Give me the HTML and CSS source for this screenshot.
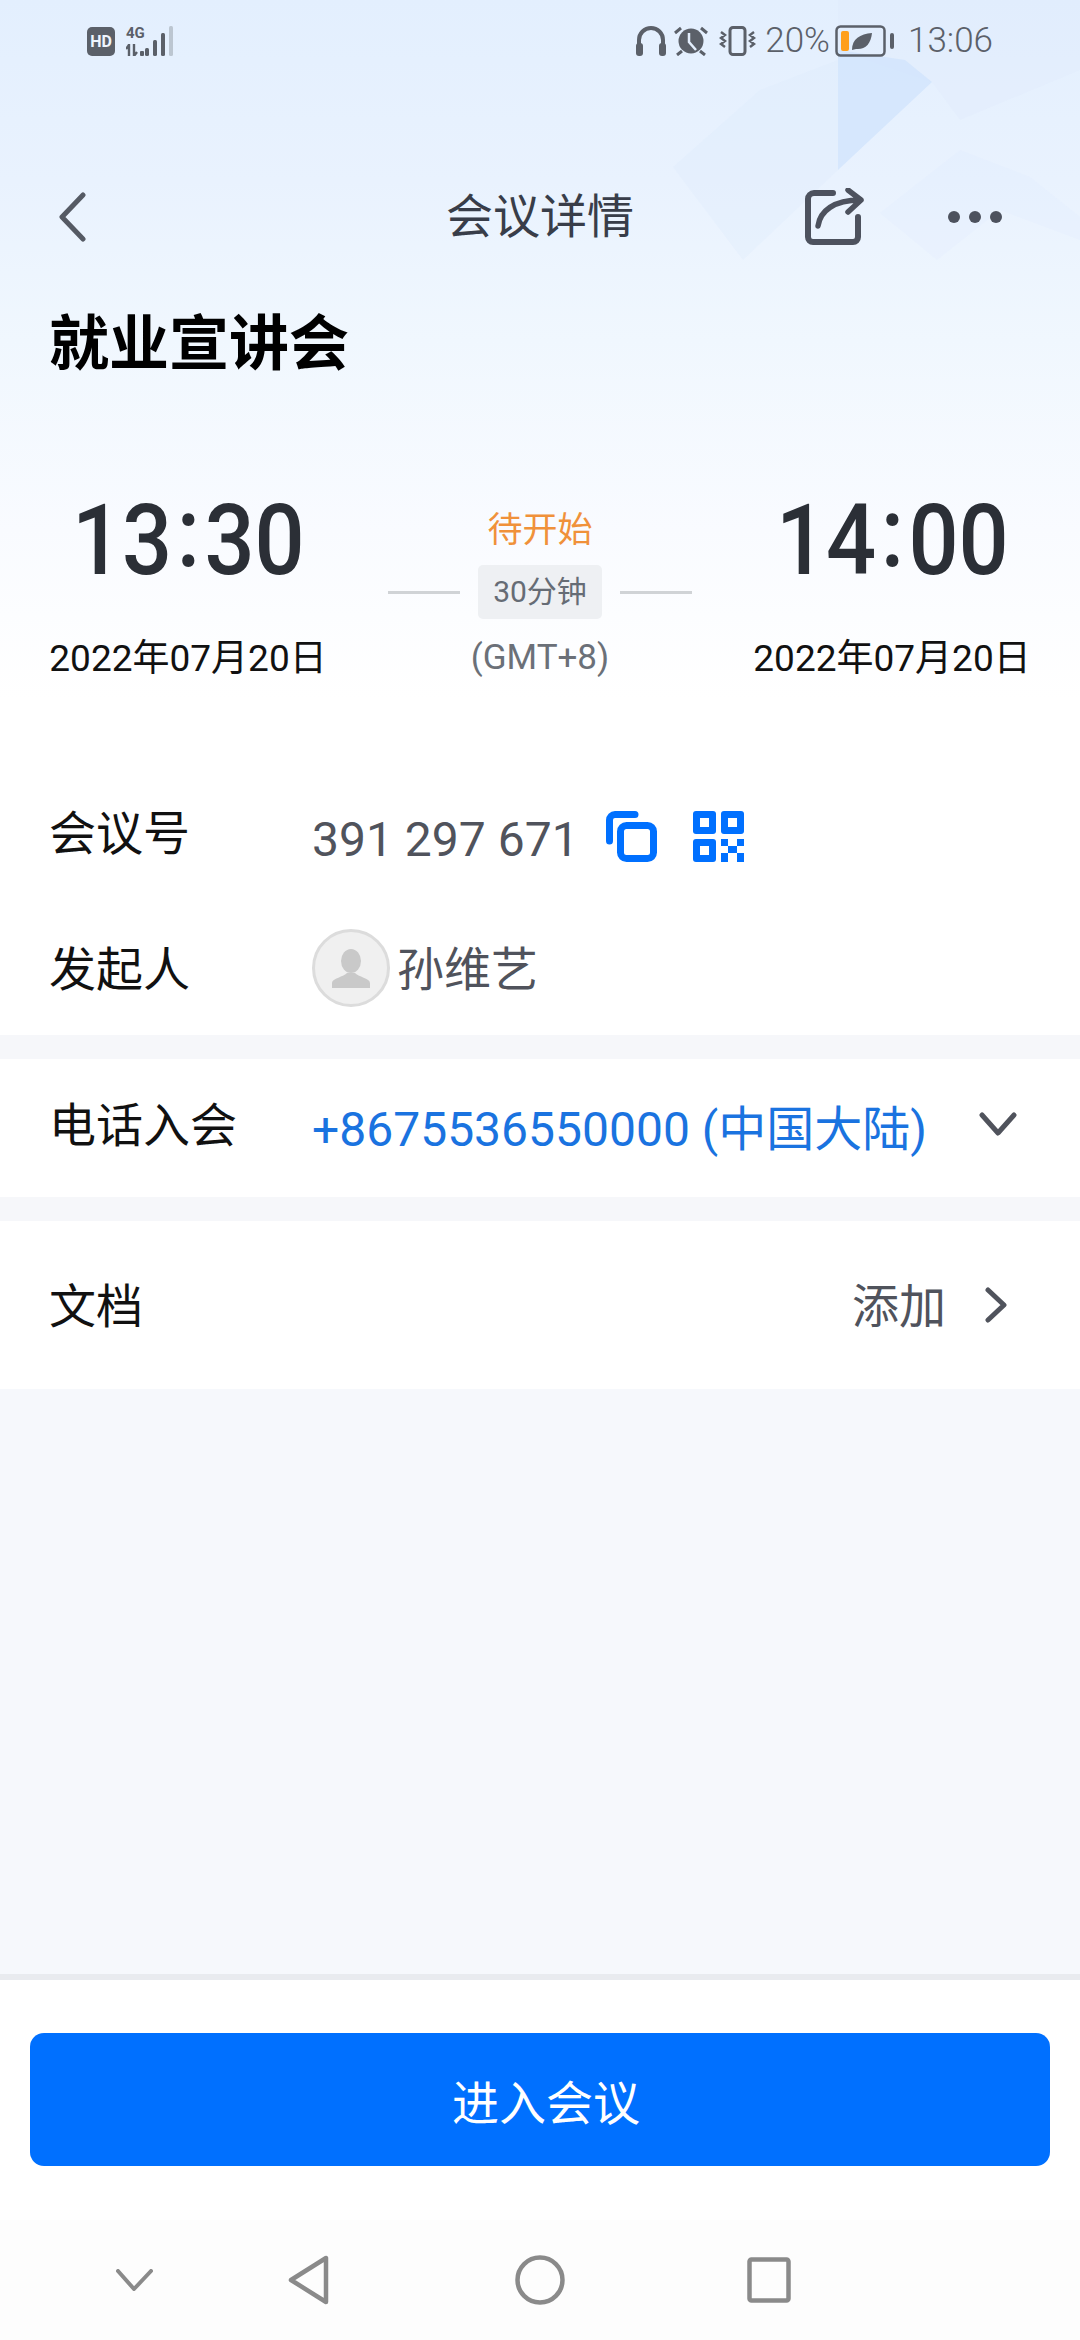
FILE: index.html
```html
<!DOCTYPE html>
<html lang="zh-CN">
<head>
<meta charset="utf-8" />
<meta name="viewport" content="width=device-width,initial-scale=1" />
<title>会议详情</title>
<link rel="stylesheet" href="styles.css">
</head>
<body>
<div class="page">

  <div class="top">
    <!-- fondo decorativo -->
    <svg class="decor" width="1080" height="330" viewBox="0 0 1080 330">
      <polygon points="673,167 760,90 838,60 838,170 743,260" fill="#dce9fc" opacity=".28"/>
      <polygon points="838,0 1080,0 1080,70 960,120 932,82 838,50" fill="#dae8fc" opacity=".2"/>
      <polygon points="838,50 905,60 932,82 838,170" fill="#cfe3fc" opacity=".7"/>
      <polygon points="880,213 960,150 1030,177 1080,217 1080,240 1000,210 937,260" fill="#dce9fc" opacity=".16"/>
    </svg>

    <div class="status">
      <div class="status-left">
        <span class="hd">HD</span>
        <div class="net">
          <span class="net-label">4G</span>
          <svg width="24" height="12" viewBox="0 0 24 12" class="net-arrows">
            <path d="M3 0v12M0 5l3-4M8 0v12M8 12l3-4" stroke="#5b6069" stroke-width="2.4" fill="none"/>
            <rect x="14" y="7" width="4" height="5" rx="1" fill="#5b6069"/>
          </svg>
        </div>
        <svg class="bars" width="29" height="30" viewBox="0 0 29 30">
          <rect x="0" y="22" width="4" height="8" rx="1.500" fill="#5b6069"/>
          <rect x="8" y="14" width="4" height="16" rx="1.500" fill="#5b6069"/>
          <rect x="16" y="7" width="4" height="23" rx="1.500" fill="#5b6069"/>
          <rect x="24" y="0" width="4" height="30" rx="1.500" fill="#bcc6d1"/>
        </svg>
      </div>
      <div class="status-right">
        <svg width="30" height="30" viewBox="0 0 30 30">
          <path d="M3 26V14a12 12 0 0 1 24 0v12" fill="none" stroke="#5b6069" stroke-width="4"/>
          <rect x="0" y="17" width="7" height="13" rx="3" fill="#5b6069"/>
          <rect x="23" y="17" width="7" height="13" rx="3" fill="#5b6069"/>
        </svg>
        <svg class="st-alarm" width="34" height="30" viewBox="0 0 34 30">
          <circle cx="17" cy="15" r="12.500" fill="#5b6069"/>
          <path d="M15 7v9l7 8" fill="none" stroke="#e3eefd" stroke-width="2.500"/>
          <path d="M1 7l6-5M33 7l-6-5M3 29l5-4M31 29l-5-4" stroke="#5b6069" stroke-width="3" fill="none"/>
        </svg>
        <svg class="st-vib" width="37" height="30" viewBox="0 0 37 30">
          <rect x="11" y="1.500" width="15" height="27" rx="3" fill="none" stroke="#5b6069" stroke-width="3"/>
          <path d="M2 6l4 3-4 3 4 3-4 3 4 3M35 6l-4 3 4 3-4 3 4 3-4 3" fill="none" stroke="#5b6069" stroke-width="2.400"/>
        </svg>
        <span class="st-pct">20%</span>
        <svg class="st-batt" width="59" height="32" viewBox="0 0 59 32">
          <rect x="1.500" y="1.500" width="48" height="29" rx="4" fill="none" stroke="#5b6069" stroke-width="2.500"/>
          <rect x="6" y="6" width="8" height="20" rx="2" fill="#ff9f1c"/>
          <path d="M17 25c0-11 8-16 20-17-1 11-7 17-16 16" fill="#5b6069"/>
          <rect x="55" y="8" width="4" height="16" rx="2" fill="#5b6069"/>
        </svg>
        <span class="st-time">13:06</span>
      </div>
    </div>

    <div class="nav">
      <svg class="nav-back" width="28" height="50" viewBox="0 0 28 50">
        <path d="M25 3L4 25l21 22" fill="none" stroke="#555a64" stroke-width="5" stroke-linecap="round" stroke-linejoin="round"/>
      </svg>
      <div class="nav-title">会议详情</div>
      <div class="nav-actions">
        <svg width="60" height="58" viewBox="0 0 60 58">
          <path d="M29 5H10a6 6 0 0 0-6 6v38a5 5 0 0 0 5 5h40a5 5 0 0 0 5-5V29" fill="none" stroke="#4d525e" stroke-width="6" stroke-linecap="round"/>
          <path d="M14 38c2-15 16-26 42-26M44 2l13 10-13 12" fill="none" stroke="#4d525e" stroke-width="5.500" stroke-linecap="round" stroke-linejoin="round"/>
        </svg>
        <svg width="54" height="16" viewBox="0 0 54 16">
          <circle cx="6" cy="8" r="6" fill="#4d525e"/>
          <circle cx="27" cy="8" r="6" fill="#4d525e"/>
          <circle cx="48" cy="8" r="6" fill="#4d525e"/>
        </svg>
      </div>
    </div>

    <h1 class="title">就业宣讲会</h1>

    <div class="times">
      <div class="time-col">
        <div class="time">13<span class="colon">:</span>30</div>
        <div class="date">2022年07月20日</div>
      </div>
      <div class="time-mid">
        <div class="state">待开始</div>
        <div class="dur-row">
          <span class="dur-line"></span>
          <span class="dur">30分钟</span>
          <span class="dur-line"></span>
        </div>
        <div class="tz">(GMT+8)</div>
      </div>
      <div class="time-col">
        <div class="time">14<span class="colon">:</span>00</div>
        <div class="date">2022年07月20日</div>
      </div>
    </div>
  </div>

  <div class="info">
    <div class="row row-id">
      <div class="label">会议号</div>
      <div class="meet-no">391 297 671</div>
      <svg class="ic-copy" width="51" height="51" viewBox="0 0 51 51">
        <path d="M3.500 30V9a5.500 5.500 0 0 1 5.500-5.500H29" fill="none" stroke="#0070ff" stroke-width="7" stroke-linecap="round"/>
        <rect x="14.500" y="14.500" width="33" height="33" rx="6" fill="none" stroke="#0070ff" stroke-width="7"/>
      </svg>
      <svg class="ic-qr" width="51" height="51" viewBox="0 0 51 51">
        <rect width="23" height="23" rx="3" fill="#0070ff"/>
        <rect x="7" y="7" width="9" height="9" fill="#fff"/>
        <rect x="28" width="23" height="23" rx="3" fill="#0070ff"/>
        <rect x="35" y="7" width="9" height="9" fill="#fff"/>
        <rect y="28" width="23" height="23" rx="3" fill="#0070ff"/>
        <rect x="7" y="35" width="9" height="9" fill="#fff"/>
        <path d="M28 28h7v7h-7zM44 28h7v7h-7zM35 35h9v7h-9zM28 42h7v9h-7zM44 42h7v9h-7z" fill="#0070ff"/>
      </svg>
    </div>
    <div class="row row-host">
      <div class="label">发起人</div>
      <div class="avatar">
        <svg width="72" height="72" viewBox="0 0 72 72">
          <ellipse cx="36" cy="29" rx="10" ry="12" fill="#c9c9c9"/>
          <path d="M17 56v-5c0-5 12-6 15-10h8c3 4 15 5 15 10v5z" fill="#c9c9c9"/>
        </svg>
      </div>
      <div class="host-name">孙维艺</div>
    </div>
  </div>

  <div class="band"></div>

  <div class="row row-phone">
    <div class="label">电话入会</div>
    <div class="phone">+8675536550000 (中国大陆)</div>
    <svg class="ic-down" width="38" height="24" viewBox="0 0 38 24">
      <path d="M3 3l16 18L35 3" fill="none" stroke="#50535c" stroke-width="5" stroke-linecap="round" stroke-linejoin="round"/>
    </svg>
  </div>

  <div class="band"></div>

  <div class="row row-doc">
    <div class="label">文档</div>
    <div class="add">添加</div>
    <svg class="ic-right" width="22" height="36" viewBox="0 0 22 36">
      <path d="M3 3l16 15L3 33" fill="none" stroke="#50535c" stroke-width="5" stroke-linecap="round" stroke-linejoin="round"/>
    </svg>
  </div>

  <div class="filler"></div>

  <div class="footer">
    <button type="button" class="btn-enter">进入会议</button>
  </div>

  <div class="sysnav">
    <svg class="sn-hide" width="37" height="22" viewBox="0 0 37 22">
      <path d="M2 2l16 18L35 2" fill="none" stroke="#8a8a8a" stroke-width="4" stroke-linecap="round" stroke-linejoin="round"/>
    </svg>
    <svg class="sn-back" width="41" height="50" viewBox="0 0 41 50">
      <path d="M38 3v44L3 25z" fill="none" stroke="#8a8a8a" stroke-width="4.500" stroke-linejoin="round"/>
    </svg>
    <svg class="sn-home" width="50" height="50" viewBox="0 0 50 50">
      <circle cx="25" cy="25" r="22.500" fill="none" stroke="#8a8a8a" stroke-width="4.500"/>
    </svg>
    <svg class="sn-recent" width="44" height="46" viewBox="0 0 44 46">
      <rect x="2.500" y="2.500" width="39" height="41" rx="2" fill="none" stroke="#8a8a8a" stroke-width="4.500"/>
    </svg>
  </div>

</div>
</body>
</html>
```

FILE: styles.css
```css
*{box-sizing:border-box;}
html,body{margin:0;padding:0;}
body{font-family:"Roboto","Noto Sans CJK SC",sans-serif;background:#fff;color:#111;}
.page{width:1080px;height:2340px;display:flex;flex-direction:column;overflow:hidden;background:#fff;}

/* cabecera con degradado */
.top{position:relative;height:763px;background:linear-gradient(180deg,#e3effe 0,#e9f2fe 180px,#f0f7fe 340px,#f9fbff 530px,#fff 700px);}
.decor{position:absolute;top:0;left:0;}
.status,.nav,.title,.times{position:relative;}

.status{height:82px;display:flex;justify-content:space-between;align-items:center;padding:0 87px;color:#5b6069;}
.status-left,.status-right{display:flex;align-items:center;}
.hd{width:28px;height:29px;border-radius:5px;background:#5b6069;color:#eef4fd;font-size:16px;font-weight:700;line-height:29px;text-align:center;}
.net{display:flex;flex-direction:column;margin-left:11px;width:24px;}
.net-label{font-size:15px;font-weight:700;line-height:15px;}
.net-arrows{margin-top:3px;}
.bars{margin-left:-5px;}
.status-right svg{display:block;}
.st-alarm{margin-left:8px;}
.st-vib{margin-left:11px;}
.st-pct{margin-left:9px;font-size:35px;line-height:40px;font-weight:300;}
.st-batt{margin-left:5px;}
.st-time{margin-left:14px;font-size:35px;line-height:40px;font-weight:300;}

.nav{margin-top:70px;height:130px;display:grid;grid-template-columns:1fr auto 1fr;align-items:center;padding:0 78px;}
.nav-back{margin-left:-20px;}
.nav-title{font-size:47px;color:#383d49;line-height:60px;}
.nav-actions{display:flex;align-items:center;justify-content:flex-end;gap:84px;}

.title{margin:0;height:122px;padding:2px 0 0 49px;font-size:60px;font-weight:700;line-height:122px;color:#000;}

.times{display:grid;grid-template-columns:272px 1fr 272px;padding:87px 52px 0;}
.time-col{display:flex;flex-direction:column;align-items:center;}
.time{height:100px;font-size:98px;line-height:100px;font-weight:500;color:#2b2f36;white-space:nowrap;transform:scaleX(.9);}
.colon{display:inline-block;margin:0 5px;transform:translateY(-8px);}
.date{margin-top:45px;font-size:37px;line-height:46px;color:#111;white-space:nowrap;}
.time-mid{display:flex;flex-direction:column;align-items:center;padding-top:17px;}
.state{font-size:35px;line-height:46px;color:#f0913a;}
.dur-row{display:flex;align-items:center;margin-top:11px;}
.dur-line{width:72px;height:3px;background:#d0d3d6;}
.dur{margin:0 18px;width:124px;height:54px;border-radius:5px;background:#eef0f3;color:#666c75;font-size:30px;line-height:54px;text-align:center;}
.tz{margin-top:16px;font-size:35px;line-height:46px;color:#6b7078;}

/* filas */
.row{display:flex;align-items:center;background:#fff;padding-left:49px;}
.label{width:263px;flex:none;padding-top:3px;font-size:47px;line-height:60px;color:#111;}
.row-id{height:138px;}
.row-host{height:134px;}
.meet-no{margin-top:16px;font-size:48px;line-height:60px;color:#50535c;white-space:nowrap;}
.ic-copy{margin:8px 0 0 27px;}
.ic-qr{margin:8px 0 0 36px;}
.avatar{width:78px;height:78px;border-radius:50%;border:3px solid #dcdcdc;background:#f0f0f0;}
.avatar svg{display:block;}
.host-name{margin-left:7px;padding-top:4px;font-size:47px;line-height:60px;color:#50535c;}
.band{height:24px;background:#f6f7fa;}
.row-phone{height:138px;}
.row-phone .label{margin-top:-8px;}
.phone{margin-top:4px;font-size:48px;line-height:60px;color:#1a73e0;white-space:nowrap;}
.ic-down{margin:-8px 0 0 52px;}
.row-doc{height:168px;padding-right:73px;}
.add{margin-left:auto;padding-top:3px;font-size:47px;line-height:60px;color:#50535c;}
.ic-right{margin-left:39px;}

.filler{flex:1;background:#f6f8fc;}

.footer{height:246px;border-top:6px solid #e9ebef;background:#fff;padding:53px 30px 0;}
.btn-enter{display:block;width:100%;height:133px;padding:0 0 0 12px;border:0;border-radius:14px;background:#0070ff;color:#fff;font:inherit;font-size:47px;}

.sysnav{height:120px;background:#fdfdfd;display:flex;align-items:center;padding-left:116px;}
.sysnav svg{display:block;}
.sn-back{margin-left:135px;}
.sn-home{margin-left:186px;}
.sn-recent{margin-left:182px;}
```
